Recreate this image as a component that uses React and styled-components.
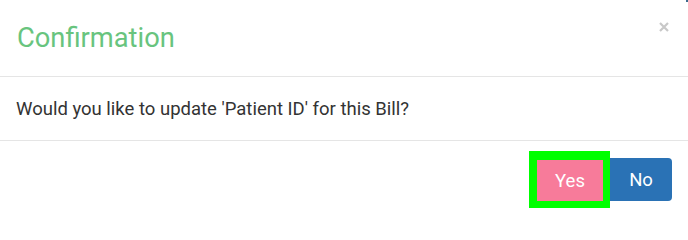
import React from "react";
import styled, { createGlobalStyle } from "styled-components";

const Global = createGlobalStyle`
  html, body { margin: 0; padding: 0; background: #fff; }
  body { font-family: Roboto, "Liberation Sans", sans-serif; }
`;

const Dialog = styled.div`
  position: relative;
  width: 688px;
  height: 217px;
  background: #fff;
  display: flex;
  flex-direction: column;
  overflow: hidden;
`;

const Header = styled.div`
  height: 77px;
  box-sizing: border-box;
  border-bottom: 1px solid #e5e5e5;
  display: flex;
  align-items: flex-start;
  justify-content: space-between;
  padding: 0 17px 0 17px;
`;

const Title = styled.h4`
  margin: 0;
  padding-top: 21px;
  font-size: 27.3px;
  font-weight: 400;
  line-height: 34px;
  color: #68c47e;
`;

const Close = styled.button`
  border: 0;
  background: none;
  padding: 0;
  margin-top: 21px;
  margin-right: 1px;
  width: 12px;
  height: 12px;
  display: flex;
  align-items: center;
  justify-content: center;
  cursor: pointer;
`;

const Corner = styled.span`
  position: absolute;
  top: 0;
  right: 0;
  width: 2px;
  height: 2px;
  background: #3b6a8c;
`;

const Body = styled.div`
  height: 64px;
  box-sizing: border-box;
  border-bottom: 1px solid #e5e5e5;
  display: flex;
  align-items: center;
  padding: 0 16px;
  font-size: 18.5px;
  color: #333;
`;

const Footer = styled.div`
  flex: 1;
  display: flex;
  justify-content: flex-end;
  align-items: flex-start;
  padding: 17px 16px 0 0;
`;

const Button = styled.button`
  font-family: Roboto, "Liberation Sans", sans-serif;
  font-size: 18.5px;
  color: #fff;
  border: 0;
  cursor: pointer;
  background: ${(p) => p.$bg};
  box-sizing: border-box;
  padding: 0;
`;

const YesButton = styled(Button)`
  width: 81px;
  height: 57px;
  margin-top: -7px;
  border: 8px solid #00ff00;
  border-right-width: 7px;
  border-bottom-width: 7px;
  border-top-width: 9px;
`;

const NoButton = styled(Button)`
  width: 62px;
  height: 43px;
  border-radius: 0 4px 4px 0;
`;

export default function App() {
  return (
    <>
      <Global />
      <Dialog>
        <Corner />
        <Header>
          <Title>Confirmation</Title>
          <Close aria-label="Close">
            <svg width="10" height="10" viewBox="0 0 10 10">
              <path d="M1 1 L9 9 M9 1 L1 9" stroke="#c8c8c8" strokeWidth="2.2" />
            </svg>
          </Close>
        </Header>
        <Body>Would you like to update 'Patient ID' for this Bill?</Body>
        <Footer>
          <YesButton $bg="#f77b9a">Yes</YesButton>
          <NoButton $bg="#2a72b5">No</NoButton>
        </Footer>
      </Dialog>
    </>
  );
}
